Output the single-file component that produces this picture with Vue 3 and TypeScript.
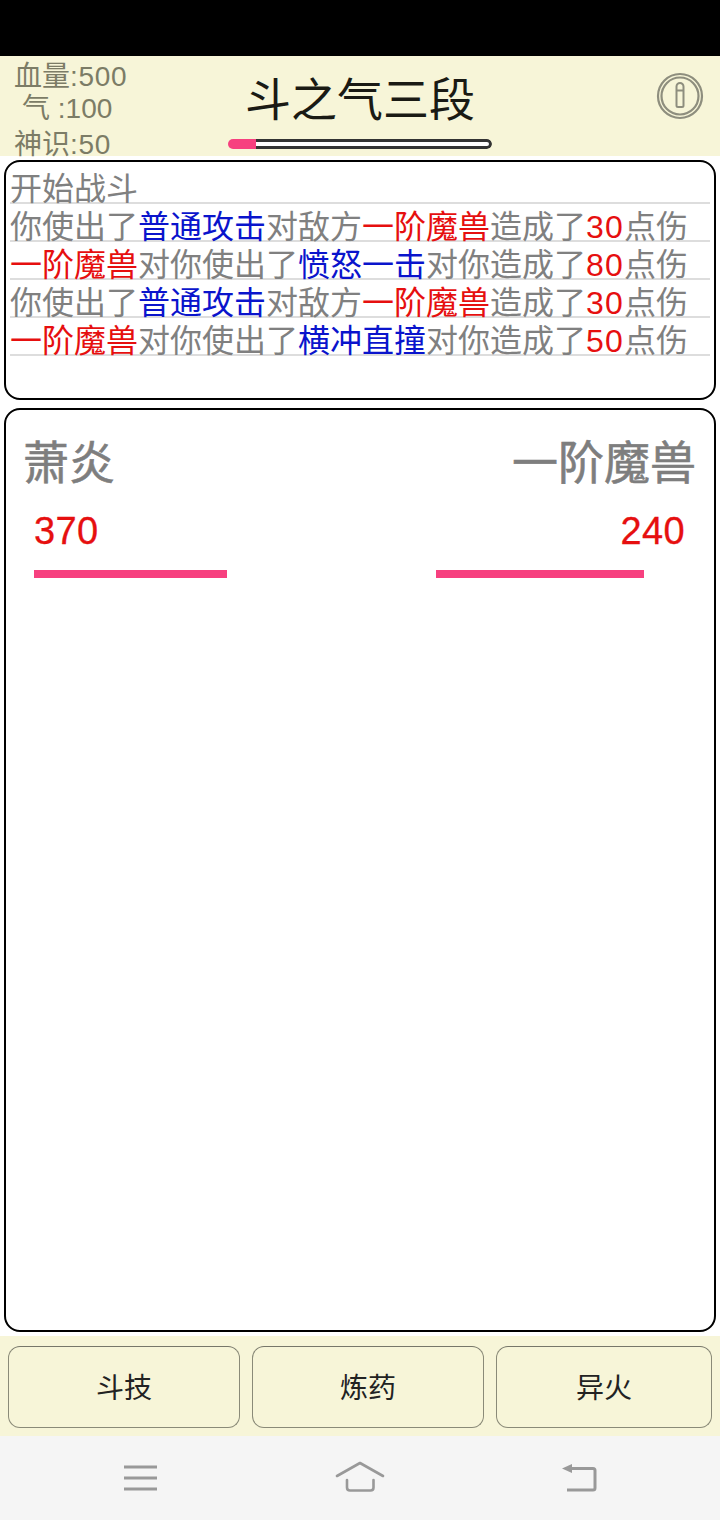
<script setup lang="ts">
interface LogPart {
  text: string
  tone?: 'red' | 'blue' | 'num'
}

const logs: LogPart[][] = [
  [{ text: '开始战斗' }],
  [
    { text: '你使出了' },
    { text: '普通攻击', tone: 'blue' },
    { text: '对敌方' },
    { text: '一阶魔兽', tone: 'red' },
    { text: '造成了' },
    { text: '30', tone: 'num' },
    { text: '点伤' },
  ],
  [
    { text: '一阶魔兽', tone: 'red' },
    { text: '对你使出了' },
    { text: '愤怒一击', tone: 'blue' },
    { text: '对你造成了' },
    { text: '80', tone: 'num' },
    { text: '点伤' },
  ],
  [
    { text: '你使出了' },
    { text: '普通攻击', tone: 'blue' },
    { text: '对敌方' },
    { text: '一阶魔兽', tone: 'red' },
    { text: '造成了' },
    { text: '30', tone: 'num' },
    { text: '点伤' },
  ],
  [
    { text: '一阶魔兽', tone: 'red' },
    { text: '对你使出了' },
    { text: '横冲直撞', tone: 'blue' },
    { text: '对你造成了' },
    { text: '50', tone: 'num' },
    { text: '点伤' },
  ],
]

const actions = ['斗技', '炼药', '异火']
</script>

<template>
  <div class="page">
    <div class="status-bar" />

    <header class="top">
      <div class="stats">
        <div>血量<span class="stat-val">:500</span></div>
        <div class="stat-qi">气 :100</div>
        <div>神识<span class="stat-val">:50</span></div>
      </div>
      <div class="level">
        <div class="level-name">斗之气三段</div>
        <div class="level-track">
          <div class="level-fill" :style="{ width: '28px' }" />
          <div class="level-rest" />
        </div>
      </div>
      <svg class="info" width="48" height="48" viewBox="0 0 48 48" fill="none" stroke="#8e8e7e">
        <circle cx="24" cy="24" r="22" stroke-width="2.2" />
        <circle cx="24" cy="24" r="18.500" stroke-width="2.2" />
        <path d="M20.500 14.500a3.500 3.500 0 0 1 7 0v19a1.500 1.500 0 0 1-1.500 1.500h-4a1.500 1.500 0 0 1-1.500-1.500zM20.500 18.500h7" stroke-width="2" />
      </svg>
    </header>

    <section class="log-box">
      <div v-for="(row, i) in logs" :key="i" class="log-row">
        <span v-for="(part, j) in row" :key="j" :class="part.tone">{{ part.text }}</span>
      </div>
    </section>

    <section class="battle">
      <div class="fighter">
        <div class="name">萧炎</div>
        <div class="hp">370</div>
        <div class="hp-bar" :style="{ width: '193px' }" />
      </div>
      <div class="fighter enemy">
        <div class="name">一阶魔兽</div>
        <div class="hp">240</div>
        <div class="hp-bar" :style="{ width: '208px' }" />
      </div>
    </section>

    <div class="actions">
      <button v-for="a in actions" :key="a" class="action">{{ a }}</button>
    </div>

    <nav class="nav-bar">
      <svg width="40" height="36" viewBox="0 0 40 36" fill="none" stroke="#999" stroke-width="3">
        <path d="M4 7H37M4 18H37M4 29H37" />
      </svg>
      <svg width="52" height="36" viewBox="0 0 52 36" fill="none" stroke="#999" stroke-width="2.600" stroke-linecap="round" stroke-linejoin="round">
        <path d="M3 16L26 3L49 16" />
        <path d="M13 20V27.500Q13 30.500 16 30.500H36.500Q39.500 30.500 39.500 27.500V20" />
      </svg>
      <svg width="40" height="36" viewBox="0 0 40 36" fill="none" stroke="#999" stroke-width="3">
        <path d="M9 8.500H33Q35 8.500 35 10.500V28Q35 30 33 30H7" />
        <path d="M2 8.500L12 4V13Z" fill="#999" stroke="none" />
      </svg>
    </nav>
  </div>
</template>

<style scoped>
.page {
  width: 720px;
  height: 1520px;
  display: flex;
  flex-direction: column;
  background: #fff;
  overflow: hidden;
  font-family: "Liberation Sans", "Noto Sans CJK SC", sans-serif;
}

.status-bar {
  height: 56px;
  background: #000;
  flex-shrink: 0;
}

.top {
  height: 100px;
  flex-shrink: 0;
  background: #f7f5d8;
  display: grid;
  grid-template-columns: 228px 264px 1fr;
  align-items: start;
}

.stats {
  padding-left: 14px;
  font-size: 28px;
  line-height: 32px;
  color: #7c7c66;
  white-space: nowrap;
  margin-top: 5px;
}

.stat-val {
  letter-spacing: 0.700px;
}

.stat-qi {
  padding-left: 8px;
  margin-bottom: 4px;
}

.level {
  display: flex;
  flex-direction: column;
  align-items: center;
}

.level-name {
  font-size: 46px;
  line-height: 66px;
  margin-top: 11px;
  color: #1a1a14;
  white-space: nowrap;
}

.level-track {
  width: 264px;
  height: 10px;
  margin-top: 6px;
  display: flex;
  border-radius: 5px;
  overflow: hidden;
}

.level-fill {
  background: #f7407f;
  flex-shrink: 0;
}

.level-rest {
  flex: 1;
  box-sizing: border-box;
  border: 3px solid #333;
  border-left: 0;
  border-radius: 0 5px 5px 0;
  background: #fff;
}

.info {
  justify-self: end;
  margin: 16px 16px 0 0;
}

.log-box {
  height: 240px;
  margin: 4px 4px 0;
  flex-shrink: 0;
  box-sizing: border-box;
  border: 2px solid #000;
  border-radius: 16px;
  padding: 4px 4px 0;
  background: #fff;
}

.log-row {
  height: 38px;
  box-sizing: border-box;
  border-bottom: 2px solid #ddd;
  padding-top: 7px;
  font-size: 32px;
  line-height: 33px;
  color: #808080;
  white-space: nowrap;
}

.red {
  color: #e60f0f;
}

.num {
  color: #e60f0f;
  letter-spacing: 1.200px;
}

.blue {
  color: #0a14cc;
}

.battle {
  height: 924px;
  margin: 8px 4px 0;
  flex-shrink: 0;
  box-sizing: border-box;
  border: 2px solid #000;
  border-radius: 16px;
  padding: 20px 18px 0 17px;
  display: flex;
  justify-content: space-between;
  align-items: flex-start;
  background: #fff;
}

.fighter {
  display: flex;
  flex-direction: column;
  align-items: flex-start;
}

.enemy {
  align-items: flex-end;
}

.name {
  font-size: 46px;
  line-height: 66px;
  -webkit-text-stroke: 0.6px #7e7e7e;
  color: #7e7e7e;
  white-space: nowrap;
}

.hp {
  font-size: 38px;
  line-height: 44px;
  color: #e60f0f;
  -webkit-text-stroke: 0.3px #e60f0f;
  letter-spacing: 0.400px;
  margin: 13px 11px 0 11px;
}

.hp-bar {
  height: 8px;
  margin: 17px 52px 0 11px;
  background: #f7407f;
}

.actions {
  height: 100px;
  margin-top: 4px;
  flex-shrink: 0;
  box-sizing: border-box;
  background: #f7f5d8;
  padding: 10px 8px 8px;
  display: grid;
  grid-template-columns: 232px 232px 216px;
  gap: 12px;
}

.action {
  border: 1px solid #8a8a78;
  border-top-color: #77776a;
  border-radius: 12px;
  background: #f7f5d8;
  color: #222;
  font-family: inherit;
  font-size: 28px;
  padding: 0 0 2px;
}

.nav-bar {
  flex: 1;
  background: #f5f5f5;
  display: grid;
  grid-template-columns: repeat(3, 220px);
  justify-content: center;
  justify-items: center;
  align-items: center;
}
</style>

<style>
body {
  background: #fff;
}
</style>
